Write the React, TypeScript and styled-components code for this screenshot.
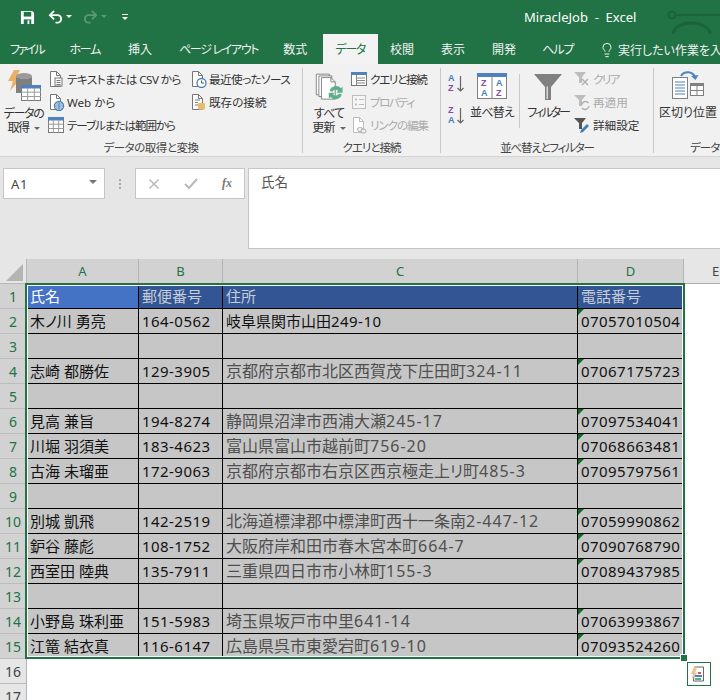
import React from 'react'
import styled, { createGlobalStyle } from 'styled-components'
import { Lightbulb } from 'lucide-react'

const FONT = '"Noto Sans", "Noto Sans CJK JP", sans-serif'
const GREEN = '#217346'

const GlobalStyle = createGlobalStyle`
  html, body {
    margin: 0;
    padding: 0;
    background: #fff;
  }
  body {
    font-family: ${FONT};
    overflow: hidden;
  }
`

const Page = styled.div`
  width: 720px;
  height: 700px;
  overflow: hidden;
  display: flex;
  flex-direction: column;
`

const TitleBar = styled.div`
  height: 34px;
  flex: none;
  background: ${GREEN};
  display: flex;
  align-items: center;
  padding-left: 18px;
  position: relative;
  overflow: hidden;
`

const QuickButton = styled.div<{ $w: number }>`
  width: ${(p) => p.$w}px;
  height: 20px;
  display: flex;
  align-items: center;
  justify-content: center;
  flex: none;
`

const TitleText = styled.div`
  margin-left: 384px;
  color: #fff;
  font-size: 13px;
  white-space: pre;
`

const TitleDeco = styled.svg`
  position: absolute;
  right: 0;
  top: 0;
`

const Tabs = styled.div`
  height: 30px;
  flex: none;
  background: ${GREEN};
  display: flex;
  overflow: hidden;
`

const Tab = styled.div<{ $active?: boolean; $ls: number; $first?: boolean; $extra: number }>`
  height: 30px;
  padding: 4px ${(p) => 12.5 + p.$extra}px 0 ${(p) => (p.$first ? 10 : 12.5)}px;
  box-sizing: border-box;
  font-size: 12px;
  line-height: 24px;
  white-space: nowrap;
  flex: none;
  letter-spacing: ${(p) => p.$ls}px;
  font-feature-settings: 'palt';
  color: ${(p) => (p.$active ? GREEN : '#f2f2f2')};
  background: ${(p) => (p.$active ? '#f3f3f3' : 'transparent')};
`

const TellMe = styled.div`
  display: flex;
  align-items: center;
  gap: 3px;
  height: 30px;
  padding: 2px 0 0 12px;
  box-sizing: border-box;
  color: #f2f2f2;
  font-size: 12px;
  white-space: nowrap;
  flex: none;
  font-feature-settings: 'palt';
`

const Ribbon = styled.div`
  height: 93px;
  flex: none;
  background: #f1f1f1;
  border-bottom: 1px solid #d4d4d4;
  box-sizing: border-box;
  display: flex;
  overflow: hidden;
  padding-top: 4px;
`

const Group = styled.div<{ $w: number }>`
  width: ${(p) => p.$w}px;
  flex: none;
  height: 85px;
  box-sizing: border-box;
  border-right: 1px solid #c9c9c9;
  display: flex;
  flex-direction: column;
`

const GroupBody = styled.div<{ $pad?: number }>`
  height: 72px;
  flex: none;
  display: flex;
  padding-left: ${(p) => p.$pad ?? 0}px;
`

const GroupLabel = styled.div<{ $ls?: number }>`
  text-align: center;
  font-size: 11.5px;
  line-height: 16px;
  color: #444;
  white-space: nowrap;
  flex: none;
  letter-spacing: ${(p) => p.$ls ?? 0}px;
  font-feature-settings: 'palt';
`

const BigButton = styled.div<{ $w: number; $top?: number }>`
  width: ${(p) => p.$w}px;
  flex: none;
  display: flex;
  flex-direction: column;
  align-items: center;
  padding-top: ${(p) => p.$top ?? 0}px;
`

const BigLabel = styled.div<{ $ls?: number; $mt?: number }>`
  font-size: 12px;
  line-height: 14px;
  color: #333;
  text-align: center;
  white-space: nowrap;
  margin-top: ${(p) => p.$mt ?? 0}px;
  letter-spacing: ${(p) => p.$ls ?? 0}px;
  font-feature-settings: 'palt';
`

const Caret = styled.span`
  display: inline-block;
  width: 0;
  height: 0;
  margin-left: 5px;
  vertical-align: 2px;
  border-left: 3px solid transparent;
  border-right: 3px solid transparent;
  border-top: 3px solid #666;
`

const SmallCol = styled.div<{ $w?: number }>`
  display: flex;
  flex-direction: column;
  width: ${(p) => (p.$w ? `${p.$w}px` : 'auto')};
  flex: none;
`

const SmallRow = styled.div<{ $off?: boolean; $ls?: number; $h?: number }>`
  height: ${(p) => p.$h ?? 23}px;
  box-sizing: border-box;
  padding-bottom: 2px;
  display: flex;
  align-items: center;
  gap: 2px;
  font-size: 11.6px;
  color: ${(p) => (p.$off ? '#aaa' : '#333')};
  white-space: nowrap;
  letter-spacing: ${(p) => p.$ls ?? 0}px;
  font-feature-settings: 'palt';
`

const IconSlot = styled.span`
  width: 18px;
  height: 18px;
  flex: none;
  display: flex;
  align-items: center;
  justify-content: center;
`

const Divider = styled.div`
  width: 1px;
  height: 54px;
  margin: 6px 3px 0 4px;
  background: #c9c9c9;
  flex: none;
`

const FormulaArea = styled.div`
  height: 102px;
  flex: none;
  background: #e6e6e6;
  display: flex;
  padding: 11px 0 0 3px;
  box-sizing: border-box;
  align-items: flex-start;
`

const NameBox = styled.div`
  width: 102px;
  height: 31px;
  flex: none;
  box-sizing: border-box;
  background: #fff;
  border: 1px solid #c6c6c6;
  display: flex;
  align-items: center;
  justify-content: space-between;
  padding: 1px 7px 0 7px;
  font-size: 13px;
  color: #444;
  letter-spacing: 0.6px;
`

const NameCaret = styled.span`
  border-left: 4px solid transparent;
  border-right: 4px solid transparent;
  border-top: 4px solid #777;
  margin-top: -4px;
`

const Dots = styled.div`
  width: 30px;
  height: 31px;
  flex: none;
  display: flex;
  flex-direction: column;
  align-items: center;
  justify-content: center;
  gap: 2px;
  i {
    width: 2px;
    height: 2px;
    background: #a8a8a8;
  }
`

const FxBox = styled.div`
  width: 110px;
  height: 31px;
  flex: none;
  box-sizing: border-box;
  background: #fff;
  border: 1px solid #c6c6c6;
  display: flex;
  align-items: center;
  justify-content: space-between;
  padding: 0 12px;
`

const FxText = styled.span`
  font-family: 'Liberation Serif', serif;
  font-style: italic;
  font-weight: 700;
  font-size: 12px;
  color: #777;
`

const FormulaInput = styled.div`
  width: 480px;
  flex: none;
  margin-left: 3px;
  height: 81px;
  box-sizing: border-box;
  background: #fff;
  border: 1px solid #c6c6c6;
  padding: 4px 12px;
  font-size: 13.5px;
  line-height: 18px;
  color: #555;
`

const Sheet = styled.div`
  position: relative;
  display: grid;
  grid-template-columns: 27px 112px 84px 355px 106px 64px;
  grid-template-rows: repeat(18, 25px);
  width: 748px;
  flex: none;
  background: #fff;
`

const Corner = styled.div`
  background: #e6e6e6;
  border-right: 1px solid #b8b8b8;
  border-bottom: 1px solid #b8b8b8;
  box-sizing: border-box;
  position: relative;
  &::after {
    content: '';
    position: absolute;
    right: 3px;
    bottom: 2px;
    border-left: 17px solid transparent;
    border-bottom: 17px solid #b4b4b4;
  }
`

const ColHead = styled.div<{ $on?: boolean }>`
  background: ${(p) => (p.$on ? '#d2d2d2' : '#e6e6e6')};
  color: ${(p) => (p.$on ? GREEN : '#444')};
  border-right: 1px solid #b4b4b4;
  border-bottom: 1px solid ${(p) => (p.$on ? '#d2d2d2' : '#ababab')};
  box-sizing: border-box;
  display: flex;
  align-items: center;
  justify-content: center;
  font-size: 13px;
`

const RowHead = styled.div<{ $on?: boolean }>`
  background: ${(p) => (p.$on ? '#d2d2d2' : '#e6e6e6')};
  color: ${(p) => (p.$on ? GREEN : '#444')};
  border-right: 1px solid #b4b4b4;
  border-bottom: 1px solid #bcbcbc;
  box-sizing: border-box;
  display: flex;
  align-items: center;
  justify-content: center;
  font-size: 14px;
`

const Cell = styled.div<{ $bg?: string; $color?: string; $flag?: boolean; $size?: number }>`
  position: relative;
  background: ${(p) => p.$bg ?? '#c6c6c6'};
  color: ${(p) => p.$color ?? '#111'};
  border-right: 1px solid #000;
  border-bottom: 1px solid #000;
  box-sizing: border-box;
  padding: 0 0 0 3px;
  font-size: ${(p) => p.$size ?? 15}px;
  line-height: 24px;
  white-space: nowrap;
  overflow: hidden;
  font-feature-settings: 'palt';
  &::before {
    content: '';
    display: ${(p) => (p.$flag ? 'block' : 'none')};
    position: absolute;
    left: 0;
    top: 0;
    border-top: 6px solid #0b6b20;
    border-right: 6px solid transparent;
  }
`

const Num = styled.span<{ $wide?: boolean }>`
  letter-spacing: ${(p) => (p.$wide ? 1 : 0.45)}px;
`

const Blank = styled.div`
  background: #fff;
`

const Selection = styled.div`
  position: absolute;
  left: 25px;
  top: 24px;
  width: 660px;
  height: 376px;
  box-sizing: border-box;
  border: 2px solid ${GREEN};
  box-shadow: inset 0 0 0 1px #fff;
  pointer-events: none;
`

const Handle = styled.div`
  position: absolute;
  left: 681px;
  top: 396px;
  width: 6px;
  height: 6px;
  background: ${GREEN};
  outline: 1px solid #fff;
`

const QuickAnalysis = styled.div`
  position: absolute;
  left: 687px;
  top: 403px;
  width: 24px;
  height: 24px;
  box-sizing: border-box;
  background: #fff;
  border: 1px solid ${GREEN};
  display: flex;
  align-items: center;
  justify-content: center;
`

const SaveIcon = () => (
  <svg width="15" height="15" viewBox="0 0 16 16">
    <path d="M1 1h12l2 2v12H1z" fill="#fff" />
    <rect x="4" y="2" width="8" height="5" fill={GREEN} />
    <rect x="4" y="10" width="8" height="5" fill={GREEN} />
    <rect x="8" y="11" width="2" height="4" fill="#fff" />
  </svg>
)

const UndoIcon = ({ flip, color }: { flip?: boolean; color: string }) => (
  <svg width="15" height="14" viewBox="0 0 16 14" style={flip ? { transform: 'scaleX(-1)' } : undefined}>
    <path d="M2 5h8a4 4 0 0 1 0 8H8" fill="none" stroke={color} strokeWidth="2" />
    <path d="M6.5 0.5 2 5l4.5 4.5" fill="none" stroke={color} strokeWidth="2" />
  </svg>
)

const MiniCaret = ({ color }: { color: string }) => (
  <svg width="6" height="4" viewBox="0 0 6 4">
    <path d="M0 0h6L3 3z" fill={color} />
  </svg>
)

const CustomizeIcon = () => (
  <svg width="7" height="7" viewBox="0 0 7 7">
    <rect y="0" width="6" height="1" fill="#fff" />
    <path d="M0 3h6L3 6z" fill="#fff" />
  </svg>
)

const SheetGlyph = ({ x = 0, y = 0, w, h }: { x?: number; y?: number; w: number; h: number }) => {
  const cols = [w / 3, (2 * w) / 3]
  const rows = [h * 0.45, h * 0.72]
  return (
    <g transform={`translate(${x} ${y})`}>
      <rect x="0.5" y="0.5" width={w - 1} height={h - 1} fill="#fff" stroke="#7a7a7a" />
      <rect x="0" y="0" width={w} height={h * 0.22} fill="#4f81bd" />
      {cols.map((c) => (
        <line key={c} x1={c} y1={h * 0.2} x2={c} y2={h} stroke="#9a9a9a" />
      ))}
      {rows.map((r) => (
        <line key={r} x1="0" y1={r} x2={w} y2={r} stroke="#9a9a9a" />
      ))}
    </g>
  )
}

const GetDataIcon = () => (
  <svg width="34" height="36" viewBox="0 0 34 36">
    <path d="M7 1h6L9 9h5L3 22l3-10H1z" fill="#eab065" />
    <ellipse cx="17" cy="7" rx="8" ry="3" fill="#9a9a9a" />
    <path d="M9 7v17h16V7a8 3 0 0 1-16 0z" fill="#7f7f7f" />
    <SheetGlyph x={14} y={16} w={20} h={16} />
  </svg>
)

const DocIcon = ({ off, children }: { off?: boolean; children?: React.ReactNode }) => (
  <svg width="18" height="18" viewBox="0 0 18 18">
    <path d="M3.5 1.5h6l4 4v11h-10z" fill="#fff" stroke={off ? '#bbb' : '#777'} />
    <path d="M9.5 1.5v4h4" fill="none" stroke={off ? '#bbb' : '#777'} />
    {children}
  </svg>
)

const TextFileIcon = () => (
  <DocIcon>
    <rect x="8" y="8" width="7" height="8" fill="#fff" stroke="#777" />
    <path d="M9.5 10.5h4M9.5 12.5h4M9.5 14.5h4" stroke="#777" />
  </DocIcon>
)

const WebIcon = () => (
  <DocIcon>
    <circle cx="12" cy="13" r="4.5" fill="#fff" stroke="#4a7fb5" strokeWidth="1.4" />
    <path d="M7.5 13h9M12 8.5v9M9 11h6M9 15h6" stroke="#4a7fb5" />
  </DocIcon>
)

const RecentIcon = () => (
  <DocIcon>
    <circle cx="12.5" cy="13" r="4.5" fill="#fff" stroke="#4a7fb5" strokeWidth="1.3" />
    <path d="M12.5 10.5V13h2.5" fill="none" stroke="#555" />
  </DocIcon>
)

const ExistingIcon = () => (
  <DocIcon>
    <path d="M6 7h5M6 9.5h3M6 12h3" stroke="#777" />
    <path d="M9 11a3.5 1.3 0 0 1 7 0v4.5a3.5 1.3 0 0 1-7 0z" fill="#e8b96f" />
  </DocIcon>
)

const TableIcon = () => (
  <svg width="18" height="18" viewBox="0 0 18 18">
    <SheetGlyph x={1} y={1} w={16} h={16} />
  </svg>
)

const RefreshIcon = () => (
  <svg width="31" height="31" viewBox="0 0 36 36" style={{ marginLeft: 3 }}>
    <path d="M1.5 2.5h15v24h-15z" fill="#fff" stroke="#777" />
    <path d="M4.5 4.5h15v24h-15z" fill="#fff" stroke="#777" />
    <path d="M7.5 6.5h11l5 5v20h-16z" fill="#fff" stroke="#777" />
    <path d="M18.5 6.5v5h5" fill="none" stroke="#777" />
    <path d="M17 22a7.5 7.5 0 0 1 13-3l2-2v7h-7l2-2a4.5 4.5 0 0 0-7 1z" fill="#5bb08a" />
    <path d="M31 26a7.5 7.5 0 0 1-13 3l-2 2v-7h7l-2 2a4.5 4.5 0 0 0 7-1z" fill="#5bb08a" />
  </svg>
)

const QueryIcon = () => (
  <svg width="18" height="18" viewBox="0 0 18 18">
    <rect x="1.5" y="2.5" width="15" height="13" fill="#fff" stroke="#777" />
    <rect x="1" y="2" width="16" height="3" fill="#4f81bd" />
    <path d="M7 8h8M7 10.5h8M7 13h8" stroke="#888" />
    <path d="M6.5 5v10" stroke="#888" />
  </svg>
)

const PropsIcon = () => (
  <svg width="18" height="18" viewBox="0 0 18 18">
    <rect x="2.5" y="2.5" width="13" height="13" fill="#f6f6f6" stroke="#bdbdbd" />
    <path d="M9 6.5h5M9 11.5h5" stroke="#bdbdbd" />
    <rect x="5" y="5.5" width="2" height="2" fill="#bdbdbd" />
    <rect x="5" y="10.5" width="2" height="2" fill="#bdbdbd" />
  </svg>
)

const LinkIcon = () => (
  <DocIcon off>
    <rect x="7.5" y="11.5" width="5" height="4" rx="2" fill="#f1f1f1" stroke="#aaa" />
    <rect x="11" y="13" width="5" height="4" rx="2" fill="#f1f1f1" stroke="#aaa" />
  </DocIcon>
)

const AZLetters = styled.text<{ $c: string }>`
  font-family: 'Liberation Sans', sans-serif;
  font-weight: 700;
  font-size: 9px;
  fill: ${(p) => p.$c};
`

const SortSmall = ({ top, bottom, topColor, bottomColor }: { top: string; bottom: string; topColor: string; bottomColor: string }) => (
  <svg width="20" height="24" viewBox="0 0 20 24">
    <AZLetters $c={topColor} x="1" y="9">{top}</AZLetters>
    <AZLetters $c={bottomColor} x="1" y="19">{bottom}</AZLetters>
    <path d="M13.5 4v15M10.5 16l3 3 3-3" fill="none" stroke="#666" strokeWidth="1.2" />
  </svg>
)

const SortBig = () => (
  <svg width="30" height="26" viewBox="0 0 30 26">
    <rect x="0.5" y="0.5" width="29" height="25" fill="#fff" stroke="#7f7f7f" />
    <rect x="0" y="0" width="30" height="4" fill="#4f81bd" />
    <line x1="15" y1="4" x2="15" y2="26" stroke="#7f7f7f" />
    <AZLetters $c="#7f4fa8" x="4" y="13">Z</AZLetters>
    <AZLetters $c="#3f7fb8" x="4" y="23">A</AZLetters>
    <AZLetters $c="#3f7fb8" x="19" y="13">A</AZLetters>
    <AZLetters $c="#7f4fa8" x="19" y="23">Z</AZLetters>
  </svg>
)

const FilterBig = () => (
  <svg width="30" height="28" viewBox="0 0 30 28">
    <path d="M1 1h28L18 14v13h-6V14z" fill="#808080" />
    <path d="M13.5 14v12h1.5V13z" fill="#d8d8d8" />
  </svg>
)

const Funnel = ({ color }: { color: string }) => <path d="M1 2h12L9 7v6H6V7z" fill={color} />

const ClearIcon = () => (
  <svg width="18" height="18" viewBox="0 0 18 18">
    <Funnel color="#bdbdbd" />
    <path d="M9 9l6 6M15 9l-6 6" stroke="#b0b0b0" strokeWidth="1.5" />
  </svg>
)

const ReapplyIcon = () => (
  <svg width="18" height="18" viewBox="0 0 18 18">
    <Funnel color="#bdbdbd" />
    <path d="M8.5 12a4 4 0 0 1 7-2M16 13a4 4 0 0 1-7 2" fill="none" stroke="#b0b0b0" strokeWidth="1.4" />
  </svg>
)

const AdvancedIcon = () => (
  <svg width="18" height="18" viewBox="0 0 18 18">
    <Funnel color="#555" />
    <path d="M7 17l1-3 6-6 2 2-6 6z" fill="#3f7fb8" />
  </svg>
)

const TextToColsIcon = () => (
  <svg width="32" height="30" viewBox="0 0 32 30">
    <path d="M9 6a8 8 0 0 1 14 1" fill="none" stroke="#4f81bd" strokeWidth="2" />
    <path d="M19 6l4.5 4 3-5z" fill="#4f81bd" />
    <rect x="0.5" y="7.5" width="15" height="21" fill="#fff" stroke="#7f7f7f" />
    <path d="M3 12h10M3 15h10M3 18h10M3 21h10M3 24h10" stroke="#4f81bd" />
    <rect x="18.5" y="13.5" width="13" height="12" fill="#fff" stroke="#7f7f7f" />
    <rect x="18" y="13" width="14" height="3" fill="#808080" />
    <path d="M25 16v9M18 20.5h14" stroke="#7f7f7f" />
  </svg>
)

const QuickAnalysisIcon = () => (
  <svg width="16" height="16" viewBox="0 0 16 16">
    <path d="M3.5 1h9v14h-10z" fill="#fff" stroke="#666" />
    <path d="M3 1h3L4 7h2L1 13l1-5H0z" fill="#f0c088" />
    <rect x="7" y="6" width="3" height="2" fill="#d9534f" />
    <rect x="4" y="9" width="7" height="2" fill="#4f81bd" />
    <rect x="4" y="12" width="6" height="2" fill="#5bb08a" />
  </svg>
)

const TitleDecoration = () => (
  <TitleDeco width="60" height="34" viewBox="0 0 60 34">
    <circle cx="12" cy="15" r="3.5" fill="none" stroke="#1b6339" strokeWidth="2" />
    <path d="M16 15h44" stroke="#1b6339" strokeWidth="2" />
    <path d="M13 34a18.5 11 0 0 1 37 0" fill="none" stroke="#1b6339" strokeWidth="3" />
  </TitleDeco>
)

type Row = { n: number; name?: string; zip?: string; addr?: [string, string]; tel?: string; pale?: boolean }

const rows: Row[] = [
  { n: 2, name: '木ノ川 勇亮', zip: '164-0562', addr: ['岐阜県関市山田', '249-10'], tel: '07057010504' },
  { n: 3 },
  { n: 4, name: '志崎 都勝佐', zip: '129-3905', addr: ['京都府京都市北区西賀茂下庄田町', '324-11'], tel: '07067175723', pale: true },
  { n: 5 },
  { n: 6, name: '見高 兼旨', zip: '194-8274', addr: ['静岡県沼津市西浦大瀬', '245-17'], tel: '07097534041', pale: true },
  { n: 7, name: '川堀 羽須美', zip: '183-4623', addr: ['富山県富山市越前町', '756-20'], tel: '07068663481', pale: true },
  { n: 8, name: '古海 未瑠亜', zip: '172-9063', addr: ['京都府京都市右京区西京極走上リ町', '485-3'], tel: '07095797561', pale: true },
  { n: 9 },
  { n: 10, name: '別城 凱飛', zip: '142-2519', addr: ['北海道標津郡中標津町西十一条南', '2-447-12'], tel: '07059990862', pale: true },
  { n: 11, name: '鈩谷 藤彪', zip: '108-1752', addr: ['大阪府岸和田市春木宮本町', '664-7'], tel: '07090768790', pale: true },
  { n: 12, name: '西室田 陸典', zip: '135-7911', addr: ['三重県四日市市小林町', '155-3'], tel: '07089437985', pale: true },
  { n: 13 },
  { n: 14, name: '小野島 珠利亜', zip: '151-5983', addr: ['埼玉県坂戸市中里', '641-14'], tel: '07063993867', pale: true },
  { n: 15, name: '江篭 結衣真', zip: '116-6147', addr: ['広島県呉市東愛宕町', '619-10'], tel: '07093524260', pale: true },
]

const tabs = [
  { label: 'ファイル', ls: -2, extra: 1 },
  { label: 'ホーム', ls: -1.3, extra: 3 },
  { label: '挿入', ls: 0, extra: 2 },
  { label: 'ページ レイアウト', ls: -1.3, extra: 0 },
  { label: '数式', ls: 0, extra: 3 },
  { label: 'データ', ls: -1.3, extra: 0 },
  { label: '校閲', ls: 0, extra: 2 },
  { label: '表示', ls: 0, extra: 2 },
  { label: '開発', ls: 0, extra: 1 },
  { label: 'ヘルプ', ls: -1, extra: 1 },
]

const App: React.FC = () => {
  return (
    <Page>
      <GlobalStyle />
      <TitleBar>
        <QuickButton $w={18}><SaveIcon /></QuickButton>
        <QuickButton $w={11} />
        <QuickButton $w={16}><UndoIcon color="#fff" /></QuickButton>
        <QuickButton $w={12}><MiniCaret color="#fff" /></QuickButton>
        <QuickButton $w={7} />
        <QuickButton $w={16}><UndoIcon flip color="#5b9a78" /></QuickButton>
        <QuickButton $w={12}><MiniCaret color="#5b9a78" /></QuickButton>
        <QuickButton $w={30}><CustomizeIcon /></QuickButton>
        <TitleText>{'MiracleJob  -  Excel'}</TitleText>
        <TitleDecoration />
      </TitleBar>
      <Tabs>
        {tabs.map((t, i) => (
          <Tab key={t.label} $ls={t.ls} $extra={t.extra} $first={i === 0} $active={t.label === 'データ'}>{t.label}</Tab>
        ))}
        <TellMe>
          <Lightbulb size={16} strokeWidth={1.4} color="#fff" />
          実行したい作業を入力してください
        </TellMe>
      </Tabs>
      <Ribbon>
        <Group $w={303}>
          <GroupBody>
            <BigButton $w={47} $top={1}>
              <GetDataIcon />
              <BigLabel $ls={-1.4} $mt={2}>データの<br />取得<Caret /></BigLabel>
            </BigButton>
            <SmallCol $w={142}>
              <SmallRow $ls={-0.55}><IconSlot><TextFileIcon /></IconSlot>テキストまたは CSV から</SmallRow>
              <SmallRow><IconSlot><WebIcon /></IconSlot>Web から</SmallRow>
              <SmallRow $ls={-1.1}><IconSlot><TableIcon /></IconSlot>テーブルまたは範囲から</SmallRow>
            </SmallCol>
            <SmallCol>
              <SmallRow $ls={-0.6}><IconSlot><RecentIcon /></IconSlot>最近使ったソース</SmallRow>
              <SmallRow><IconSlot><ExistingIcon /></IconSlot>既存の接続</SmallRow>
            </SmallCol>
          </GroupBody>
          <GroupLabel $ls={-0.5}>データの取得と変換</GroupLabel>
        </Group>
        <Group $w={138}>
          <GroupBody $pad={5}>
            <BigButton $w={42} $top={4}>
              <RefreshIcon />
              <BigLabel $ls={-0.8} $mt={4}>すべて<br />更新<Caret /></BigLabel>
            </BigButton>
            <SmallCol>
              <SmallRow $ls={-1.3}><IconSlot><QueryIcon /></IconSlot>クエリと接続</SmallRow>
              <SmallRow $off $ls={-1.6}><IconSlot><PropsIcon /></IconSlot>プロパティ</SmallRow>
              <SmallRow $off $ls={-1.1}><IconSlot><LinkIcon /></IconSlot>リンクの編集</SmallRow>
            </SmallCol>
          </GroupBody>
          <GroupLabel $ls={-1}>クエリと接続</GroupLabel>
        </Group>
        <Group $w={213}>
          <GroupBody $pad={6}>
            <SmallCol $w={22}>
              <SmallRow $h={34}><SortSmall top="A" bottom="Z" topColor="#3f7fb8" bottomColor="#7f4fa8" /></SmallRow>
              <SmallRow $h={30}><SortSmall top="Z" bottom="A" topColor="#7f4fa8" bottomColor="#3f7fb8" /></SmallRow>
            </SmallCol>
            <BigButton $w={46} $top={5}>
              <SortBig />
              <BigLabel $ls={-0.8} $mt={7}>並べ替え</BigLabel>
            </BigButton>
            <Divider />
            <BigButton $w={50} $top={5}>
              <FilterBig />
              <BigLabel $ls={-2.2} $mt={5}>フィルター</BigLabel>
            </BigButton>
            <SmallCol>
              <SmallRow $off $ls={-1.6}><IconSlot><ClearIcon /></IconSlot>クリア</SmallRow>
              <SmallRow $off><IconSlot><ReapplyIcon /></IconSlot>再適用</SmallRow>
              <SmallRow><IconSlot><AdvancedIcon /></IconSlot>詳細設定</SmallRow>
            </SmallCol>
          </GroupBody>
          <GroupLabel $ls={-1.2}>並べ替えとフィルター</GroupLabel>
        </Group>
        <Group $w={134}>
          <GroupBody $pad={6}>
            <BigButton $w={56} $top={2}>
              <TextToColsIcon />
              <BigLabel $mt={6}>区切り位置</BigLabel>
            </BigButton>
          </GroupBody>
          <GroupLabel $ls={-1}>データ ツール</GroupLabel>
        </Group>
      </Ribbon>
      <FormulaArea>
        <NameBox>A1<NameCaret /></NameBox>
        <Dots><i /><i /><i /></Dots>
        <FxBox>
          <svg width="12" height="12" viewBox="0 0 12 12">
            <path d="M1.5 1.5l9 9M10.5 1.5l-9 9" stroke="#b9b9b9" strokeWidth="1.5" />
          </svg>
          <svg width="14" height="12" viewBox="0 0 14 12">
            <path d="M1 6l4 4 8-9" fill="none" stroke="#b9b9b9" strokeWidth="2" />
          </svg>
          <FxText>fx</FxText>
        </FxBox>
        <FormulaInput>氏名</FormulaInput>
      </FormulaArea>
      <Sheet>
        <Corner />
        <ColHead $on>A</ColHead>
        <ColHead $on>B</ColHead>
        <ColHead $on>C</ColHead>
        <ColHead $on>D</ColHead>
        <ColHead>E</ColHead>

        <RowHead $on>1</RowHead>
        <Cell $bg="#4472c4" $color="#fff">氏名</Cell>
        <Cell $bg="#335593" $color="#c6cdda">郵便番号</Cell>
        <Cell $bg="#335593" $color="#c6cdda">住所</Cell>
        <Cell $bg="#335593" $color="#c6cdda">電話番号</Cell>
        <Blank />

        {rows.map((r) => (
          <React.Fragment key={r.n}>
            <RowHead $on>{r.n}</RowHead>
            <Cell>{r.name}</Cell>
            <Cell>{r.zip && <Num>{r.zip}</Num>}</Cell>
            <Cell $color={r.pale ? '#4f4f4f' : '#111'} $size={r.pale ? 16 : 15}>
              {r.addr && (
                <>
                  {r.addr[0]}
                  <Num $wide={r.pale}>{r.addr[1]}</Num>
                </>
              )}
            </Cell>
            <Cell $flag={!!r.tel}>{r.tel && <Num>{r.tel}</Num>}</Cell>
            <Blank />
          </React.Fragment>
        ))}

        <RowHead>16</RowHead>
        <Blank /><Blank /><Blank /><Blank /><Blank />
        <RowHead>17</RowHead>
        <Blank /><Blank /><Blank /><Blank /><Blank />

        <Selection />
        <Handle />
        <QuickAnalysis><QuickAnalysisIcon /></QuickAnalysis>
      </Sheet>
    </Page>
  )
}

export default App
